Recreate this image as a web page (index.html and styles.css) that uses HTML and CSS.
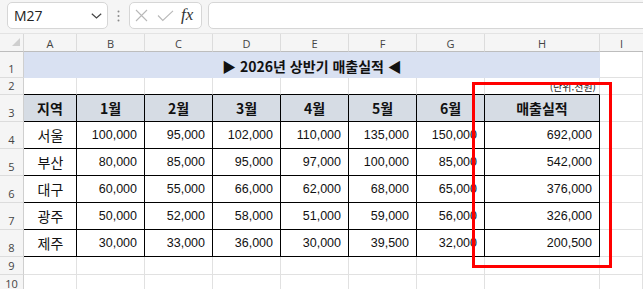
FILE: index.html
```html
<!DOCTYPE html>
<html lang="ko">
<head>
<meta charset="utf-8">
<link rel="stylesheet" href="styles.css">
</head>
<body>
<div class="app">
  <div class="toolbar">
    <div class="namebox">
      <span class="ref">M27</span>
      <svg class="chev" width="11" height="6" viewBox="0 0 11 6"><path d="M0.8 0.8 L5.5 5 L10.2 0.8" fill="none" stroke="#444" stroke-width="1.2"/></svg>
    </div>
    <div class="grip">
      <svg width="3" height="12" viewBox="0 0 3 12"><circle cx="1.5" cy="1.5" r="1" fill="#8a8a8a"/><circle cx="1.5" cy="6" r="1" fill="#8a8a8a"/><circle cx="1.5" cy="10.5" r="1" fill="#8a8a8a"/></svg>
    </div>
    <div class="fxbox">
      <svg class="ico" width="13" height="13" viewBox="0 0 13 13"><path d="M1 1 L12 12 M12 1 L1 12" stroke="#b8b8b8" stroke-width="1.1" fill="none"/></svg>
      <svg class="ico" width="17" height="12" viewBox="0 0 17 12"><path d="M1 5.5 L5.8 10.5 L16 0.8" stroke="#b8b8b8" stroke-width="1.1" fill="none"/></svg>
      <span class="fx">fx</span>
    </div>
    <div class="formula"></div>
  </div>

  <div class="sheet">
    <!-- column headers -->
    <div class="corner"><span class="tri"></span></div>
    <div class="hd">A</div><div class="hd">B</div><div class="hd">C</div><div class="hd">D</div>
    <div class="hd">E</div><div class="hd">F</div><div class="hd">G</div><div class="hd">H</div><div class="hd last">I</div>

    <!-- row 1 -->
    <div class="rh">1</div>
    <div class="title">▶ 2026년 상반기 매출실적 ◀</div>
    <div class="c"></div>

    <!-- row 2 -->
    <div class="rh">2</div>
    <div class="c top"></div><div class="c top"></div><div class="c top"></div><div class="c top"></div>
    <div class="c top"></div><div class="c top"></div><div class="c top"></div>
    <div class="c top unit">(단위:천원)</div>
    <div class="c"></div>

    <!-- row 3 -->
    <div class="rh">3</div>
    <div class="c t th">지역</div><div class="c t th">1월</div><div class="c t th">2월</div><div class="c t th">3월</div>
    <div class="c t th">4월</div><div class="c t th">5월</div><div class="c t th">6월</div><div class="c t th">매출실적</div>
    <div class="c"></div>

    <!-- row 4 -->
    <div class="rh">4</div>
    <div class="c t ctr">서울</div><div class="c t num">100,000</div><div class="c t num">95,000</div><div class="c t num">102,000</div>
    <div class="c t num">110,000</div><div class="c t num">135,000</div><div class="c t num">150,000</div><div class="c t num">692,000</div>
    <div class="c"></div>

    <!-- row 5 -->
    <div class="rh">5</div>
    <div class="c t ctr">부산</div><div class="c t num">80,000</div><div class="c t num">85,000</div><div class="c t num">95,000</div>
    <div class="c t num">97,000</div><div class="c t num">100,000</div><div class="c t num">85,000</div><div class="c t num">542,000</div>
    <div class="c"></div>

    <!-- row 6 -->
    <div class="rh">6</div>
    <div class="c t ctr">대구</div><div class="c t num">60,000</div><div class="c t num">55,000</div><div class="c t num">66,000</div>
    <div class="c t num">62,000</div><div class="c t num">68,000</div><div class="c t num">65,000</div><div class="c t num">376,000</div>
    <div class="c"></div>

    <!-- row 7 -->
    <div class="rh">7</div>
    <div class="c t ctr">광주</div><div class="c t num">50,000</div><div class="c t num">52,000</div><div class="c t num">58,000</div>
    <div class="c t num">51,000</div><div class="c t num">59,000</div><div class="c t num">56,000</div><div class="c t num">326,000</div>
    <div class="c"></div>

    <!-- row 8 -->
    <div class="rh">8</div>
    <div class="c t ctr">제주</div><div class="c t num">30,000</div><div class="c t num">33,000</div><div class="c t num">36,000</div>
    <div class="c t num">30,000</div><div class="c t num">39,500</div><div class="c t num">32,000</div><div class="c t num">200,500</div>
    <div class="c"></div>

    <!-- row 9 -->
    <div class="rh">9</div>
    <div class="c"></div><div class="c"></div><div class="c"></div><div class="c"></div><div class="c"></div>
    <div class="c"></div><div class="c"></div><div class="c"></div><div class="c"></div>

    <!-- row 10 -->
    <div class="rh">10</div>
    <div class="c"></div><div class="c"></div><div class="c"></div><div class="c"></div><div class="c"></div>
    <div class="c"></div><div class="c"></div><div class="c"></div><div class="c"></div>
  </div>

  <div class="highlight"></div>
</div>
</body>
</html>
```

FILE: styles.css
```css
html, body {
  margin: 0;
  padding: 0;
  background: #ffffff;
  overflow: hidden;
}

.app {
  position: relative;
  width: 643px;
  height: 289px;
  overflow: hidden;
  font-family: "Noto Sans CJK KR", "Noto Sans", sans-serif;
}

/* ---------- toolbar / formula bar ---------- */
.toolbar {
  box-sizing: border-box;
  height: 34px;
  padding: 2px 0 0 7px;
  display: flex;
  align-items: flex-start;
  background: #f5f5f5;
  border-bottom: 1px solid #e3e3e3;
}

.namebox {
  box-sizing: border-box;
  width: 101px;
  height: 27px;
  background: #fff;
  border: 1px solid #d6d6d6;
  border-radius: 5px;
  display: flex;
  align-items: center;
  padding: 0 5px 0 6px;
}

.ref {
  flex: 1;
  font-family: "Open Sans", "Noto Sans", sans-serif;
  font-size: 14px;
  color: #222;
  line-height: 1;
}

.chev { display: block; }

.grip {
  width: 21px;
  height: 27px;
  display: flex;
  align-items: center;
  justify-content: center;
}
.grip svg { display: block; }

.fxbox {
  box-sizing: border-box;
  width: 73px;
  height: 27px;
  background: #fff;
  border: 1px solid #d6d6d6;
  border-radius: 5px;
  display: flex;
  align-items: center;
  padding: 0 0 0 5px;
  gap: 9px;
}
.fxbox .ico { display: block; }

.fx {
  font-family: "Liberation Serif", serif;
  font-style: italic;
  font-size: 17px;
  color: #333;
  line-height: 1;
  margin-left: -2px;
  margin-top: -2px;
}

.formula {
  flex: 1;
  box-sizing: border-box;
  height: 27px;
  margin-left: 6px;
  margin-right: -8px;
  background: #fff;
  border: 1px solid #d6d6d6;
  border-radius: 5px;
}

/* ---------- sheet grid ---------- */
.sheet {
  display: grid;
  grid-template-columns: 24px 53px repeat(6, 68px) 115px 1fr;
  grid-template-rows: 18px 26px 17px repeat(6, 27px) 18px 18px;
}

.sheet > div {
  box-sizing: border-box;
  display: flex;
  align-items: center;
  min-width: 0;
}

.corner {
  background: #f5f5f5;
  border-right: 1px solid #d8d8d8;
  border-bottom: 1px solid #bdbdbd;
  position: relative;
}
.tri {
  position: absolute;
  right: 3px;
  bottom: 5px;
  width: 0;
  height: 0;
  border-left: 8px solid transparent;
  border-bottom: 8px solid #cfcfcf;
}

.hd {
  background: #f5f5f5;
  border-right: 1px solid #dcdcdc;
  border-bottom: 1px solid #bdbdbd;
  justify-content: center;
  font-family: "Open Sans", "Noto Sans", sans-serif;
  font-size: 11px;
  color: #444;
  padding-top: 1px;
}
.hd.last { border-right: none; }

.rh {
  background: #f5f5f5;
  border-right: 1px solid #cfcfcf;
  border-bottom: 1px solid #dcdcdc;
  justify-content: center;
  align-items: flex-end !important;
  padding-bottom: 1px;
  font-family: "Open Sans", "Noto Sans", sans-serif;
  font-size: 11px;
  line-height: 15px;
  color: #444;
}

.c {
  border-right: 1px solid #e1e1e1;
  border-bottom: 1px solid #e1e1e1;
  padding: 0 6px;
  font-size: 13px;
  color: #111;
  line-height: 1;
  white-space: nowrap;
}

.title {
  grid-column: 2 / 10;
  background: #d9e1f2;
  justify-content: center;
  font-size: 14px;
  font-weight: 700;
  color: #111;
  line-height: 1;
  padding-top: 1px;
}

.top { border-bottom: 1px solid #000 !important; }

.unit {
  justify-content: flex-end;
  font-size: 10px;
  color: #222;
  padding-right: 3px;
  padding-top: 1px;
}

.t {
  border-right: 1px solid #000;
  border-bottom: 1px solid #000;
}

.th {
  background: #d6dce4;
  justify-content: center;
  font-weight: 700;
  font-size: 14px;
}

.ctr {
  justify-content: center;
  font-size: 14px;
  padding-right: 5px;
}

.num {
  justify-content: flex-end;
  font-family: "Liberation Sans", "Noto Sans", sans-serif;
  font-size: 12.5px;
  padding-right: 7px;
  overflow: visible;
}

/* ---------- annotation overlay ---------- */
.highlight {
  position: absolute;
  left: 472px;
  top: 82px;
  width: 140px;
  height: 186px;
  box-sizing: border-box;
  border: 3px solid #ff0000;
  pointer-events: none;
}
```
